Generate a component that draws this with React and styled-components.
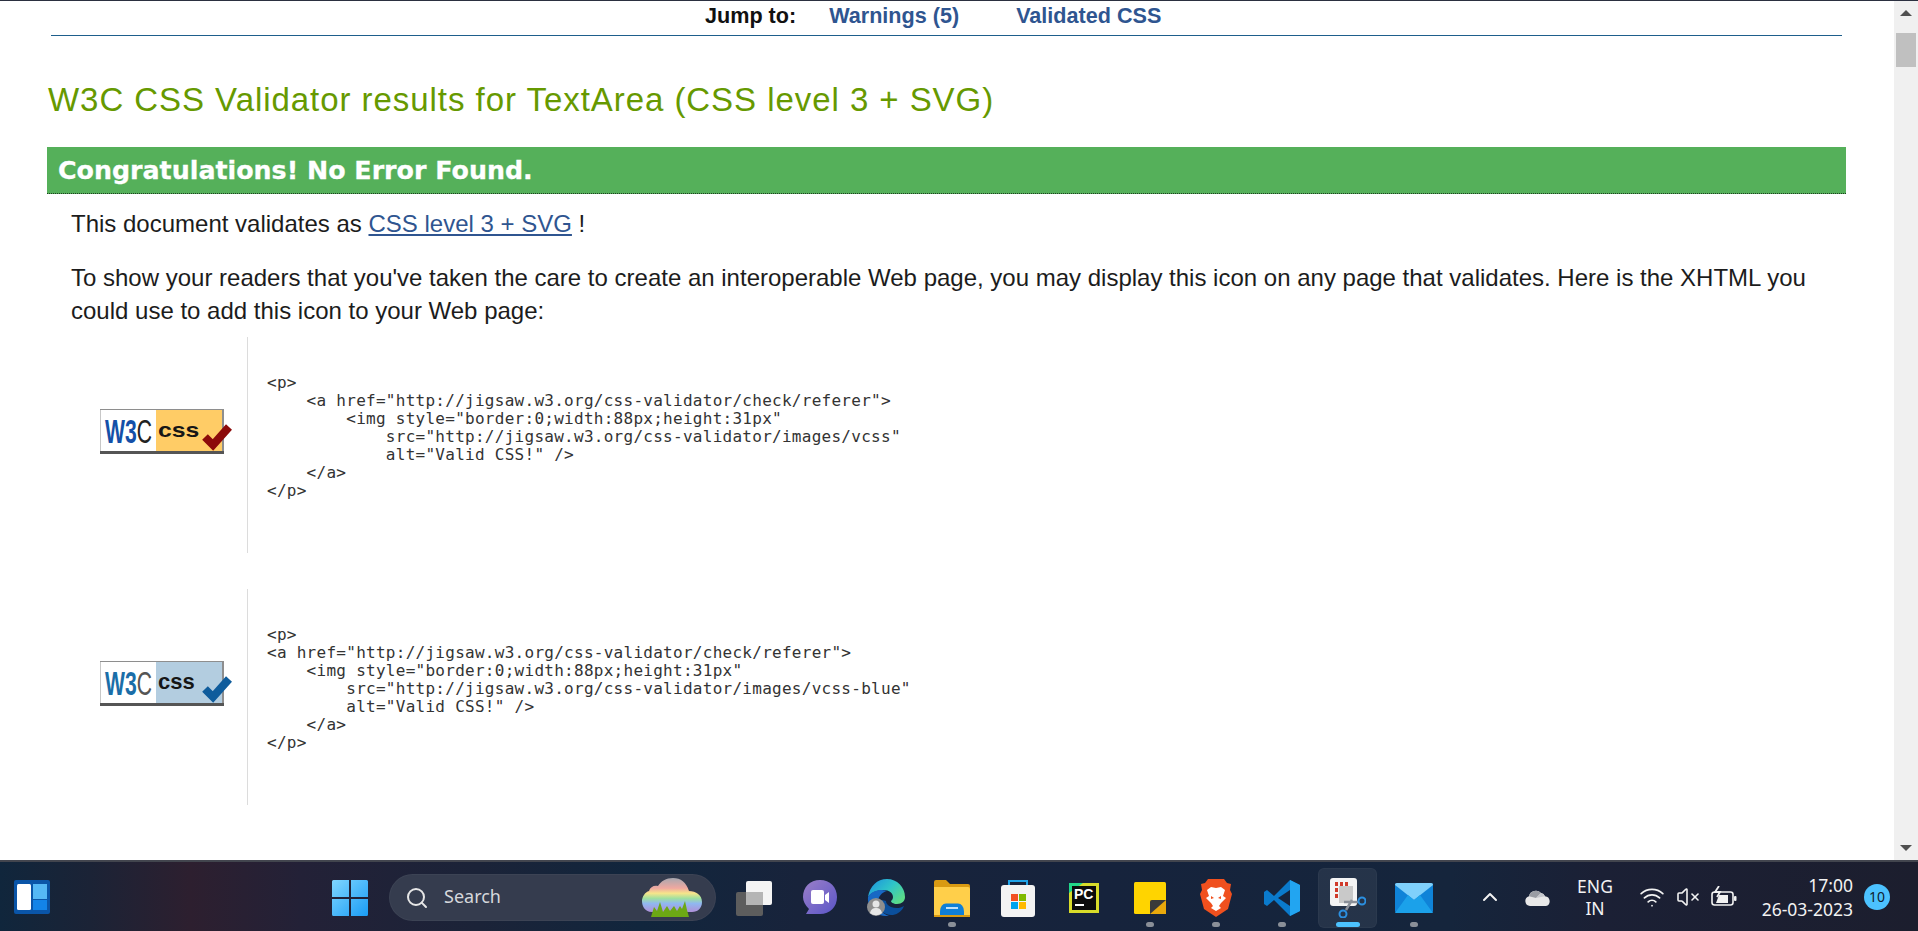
import React from "react";
import styled, { createGlobalStyle } from "styled-components";
import { Search, ChevronUp, Wifi, VolumeX } from "lucide-react";

const GlobalStyle = createGlobalStyle`
  html, body { margin: 0; padding: 0; height: 100%; overflow: hidden; background: #fff; }
  body { font-family: "Liberation Sans", Arial, sans-serif; color: #1c1c1c; }
`;

const Screen = styled.div`
  width: 1918px;
  height: 931px;
  display: flex;
  flex-direction: column;
  overflow: hidden;
`;

const Browser = styled.div`
  height: 860px;
  display: flex;
  border-top: 1px solid #2b3040;
  box-sizing: border-box;
  overflow: hidden;
`;

const Page = styled.main`
  flex: 1;
  min-width: 0;
`;

const JumpNav = styled.nav`
  margin: 0 52px 0 51px;
  height: 35px;
  padding-bottom: 5px;
  padding-left: 654px;
  box-sizing: border-box;
  display: flex;
  align-items: center;
  font-size: 21.6px;
  font-weight: bold;
  border-bottom: 1px solid #1e5f8c;
`;

const JumpLabel = styled.span`
  color: #111;
  margin-right: 33px;
`;

const JumpLink = styled.a`
  color: #2f5590;
  margin-right: 57px;
`;

const Heading = styled.h2`
  margin: 46px 0 0 48px;
  height: 36px;
  font-size: 33px;
  line-height: 36px;
  font-weight: normal;
  letter-spacing: 0.95px;
  color: #669900;
  white-space: nowrap;
`;

const Banner = styled.h3`
  margin: 29px 0 0 47px;
  width: 1799px;
  height: 47px;
  box-sizing: border-box;
  padding-left: 11px;
  background: #55b05a;
  border-bottom: 1px dotted #1c3f1e;
  color: #fff;
  font-family: "DejaVu Sans", sans-serif;
  font-size: 25.3px;
  line-height: 48px;
  font-weight: bold;
  -webkit-text-stroke: 0.3px #fff;
`;

const Copy = styled.p`
  margin: ${(p) => p.$top}px 0 0 71px;
  width: 1760px;
  font-size: 24px;
  line-height: 33px;
  color: #1c1c1c;
`;

const Underlined = styled.a`
  color: #2f5590;
  text-decoration: underline;
`;

const IconRow = styled.section`
  margin: ${(p) => p.$top}px 0 0 71px;
  height: 216px;
  display: flex;
`;

const BadgeCell = styled.div`
  width: 177px;
  padding: 72px 0 0 29px;
  box-sizing: border-box;
  border-right: 1px solid #dcdcdc;
`;

const Code = styled.pre`
  margin: 37px 0 0 19px;
  font-family: "DejaVu Sans Mono", "Liberation Mono", monospace;
  font-size: 16px;
  letter-spacing: 0.27px;
  line-height: 18px;
  color: #333;
`;

const Scrollbar = styled.aside`
  width: 24px;
  background: #f0f0f0;
  display: flex;
  flex-direction: column;
  align-items: center;
  padding-top: 9px;
  box-sizing: border-box;
`;

const Thumb = styled.div`
  width: 20px;
  height: 34px;
  margin-top: 17px;
  background: #c0c0c0;
`;

const Arrow = styled.div`
  width: 0;
  height: 0;
  border-left: 6px solid transparent;
  border-right: 6px solid transparent;
  ${(p) => (p.$down ? "border-top: 6px solid #505050; margin-top: auto; margin-bottom: 9px;" : "border-bottom: 6px solid #505050;")}
`;

const Taskbar = styled.footer`
  flex: 1;
  display: flex;
  align-items: center;
  border-top: 2px solid #42454e;
  box-sizing: border-box;
  color: #f2f2f2;
  font-family: "Noto Sans", "Open Sans", sans-serif;
  background: linear-gradient(90deg, #10263c 0, #1b2336 90px, #2d1f2f 190px, #232137 300px, #1b2338 480px, #11263d 640px, #18233b 800px, #16233c 1100px, #15253c 1450px, #1b2035 1600px, #1c1e2e 1918px);
`;

const WidgetsSlot = styled.div`
  margin-left: 14px;
  width: 36px;
  height: 34px;
  margin-right: 267px;
`;

const Cell = styled.div`
  position: relative;
  width: 66px;
  height: 60px;
  margin-top: 2px;
  display: flex;
  align-items: center;
  justify-content: center;
  box-sizing: border-box;
  ${(p) => p.$active && "&::before { content: ''; position: absolute; left: 3px; right: 4px; top: 0; bottom: 0; background: rgba(255,255,255,0.07); border-radius: 6px; box-shadow: inset 0 0 0 1px rgba(255,255,255,0.03); }"}
`;

const Dot = styled.span`
  position: absolute;
  left: 50%;
  bottom: 1px;
  transform: translateX(-50%);
  width: ${(p) => (p.$active ? 24 : 8)}px;
  height: 5px;
  border-radius: 3px;
  background: ${(p) => (p.$active ? "#4cc2ff" : "#8a8f98")};
`;

const SearchPill = styled.div`
  margin: 2px 5px 0 6px;
  width: 327px;
  height: 47px;
  box-sizing: border-box;
  padding: 0 14px 0 16px;
  border-radius: 24px;
  background: #353c4e;
  box-shadow: inset 0 0 0 1px rgba(255, 255, 255, 0.04);
  display: flex;
  align-items: center;
  color: #d6d8dc;
  font-size: 18px;
`;

const SearchLabel = styled.span`
  margin-left: 15px;
  padding-bottom: 3px;
  flex: 1;
`;

const Tray = styled.div`
  margin-left: auto;
  padding-right: 28px;
  display: flex;
  align-items: center;
  font-size: 17.5px;
`;

const TraySlot = styled.div`
  width: ${(p) => p.$w}px;
  display: flex;
  justify-content: center;
  align-items: center;
`;

const Lang = styled.div`
  width: 62px;
  margin-right: 8px;
  text-align: center;
  line-height: 22px;
`;

const Clock = styled.div`
  width: 111px;
  text-align: right;
  line-height: 24px;
`;

const Count = styled.div`
  width: 26px;
  height: 26px;
  margin-left: 11px;
  border-radius: 50%;
  background: #4cc2ff;
  color: #10202f;
  font-size: 14px;
  line-height: 26px;
  text-align: center;
`;

const cssFont = "Liberation Sans, Arial, sans-serif";

const Badge = ({ blue }) => (
  <svg width="136" height="48" viewBox="0 0 136 48" role="img" aria-label="Valid CSS">
    <rect x="0" y="0" width="124" height="45" fill="#8e8e8e" />
    <rect x="0.5" y="1" width="56" height="41" fill="#fff" />
    <rect x="56" y="1" width="66" height="41" fill={blue ? "#b3cde0" : "#ffcc66"} />
    <rect x="0" y="42" width="124" height="3" fill="#555" />
    <text transform="translate(5 34) scale(0.64 1)" fontFamily={cssFont} fontSize="33">
      <tspan fontWeight="bold" fill={blue ? "#1a6ea8" : "#1450a8"}>W3</tspan>
      <tspan fill={blue ? "#555" : "#222"}>C</tspan>
    </text>
    <text transform={blue ? "translate(58 28)" : "translate(58 28) scale(1.24 1)"} fontFamily={cssFont} fontSize={blue ? 22 : 20} fontWeight="bold" fill="#161616">css</text>
    <polyline points="105,28 113,36 129,18" fill="none" stroke={blue ? "#0f5c9c" : "#8c0a0a"} strokeWidth="8" />
  </svg>
);

const WidgetsIcon = () => (
  <svg width="36" height="34" viewBox="0 0 36 34">
    <rect width="36" height="34" rx="2" fill="#0a55a8" />
    <rect x="3" y="4" width="14" height="26" rx="1.5" fill="#fff" />
    <rect x="19" y="4" width="14" height="15" fill="#55b8f5" />
    <rect x="19" y="20" width="14" height="10" fill="#1384e8" />
  </svg>
);

const StartIcon = () => (
  <svg width="36" height="36" viewBox="0 0 36 36">
    <defs>
      <linearGradient id="st" x1="0" y1="0" x2="1" y2="1">
        <stop offset="0" stopColor="#7fd6ff" />
        <stop offset="1" stopColor="#1a9cf5" />
      </linearGradient>
    </defs>
    <path d="M1.5 0H17v17H0V1.5A1.5 1.5 0 0 1 1.5 0ZM19 0h15.5A1.5 1.5 0 0 1 36 1.5V17H19ZM0 19h17v17H1.5A1.5 1.5 0 0 1 0 34.5ZM19 19h17v15.5a1.5 1.5 0 0 1-1.5 1.5H19Z" fill="url(#st)" />
  </svg>
);

const RainbowCloud = () => (
  <svg width="60" height="42" viewBox="0 0 60 42">
    <defs>
      <linearGradient id="rb" x1="0" y1="0" x2="0" y2="1">
        <stop offset="0" stopColor="#a8a8b0" />
        <stop offset="0.3" stopColor="#f0a8a0" />
        <stop offset="0.45" stopColor="#f6e58a" />
        <stop offset="0.6" stopColor="#9fe0a0" />
        <stop offset="0.75" stopColor="#90b8f0" />
        <stop offset="1" stopColor="#b090d8" />
      </linearGradient>
    </defs>
    <path d="M10 35C2 35 0 28 0 24s3-9 7-10c1-4 5-6 9-5 3-5 8-8 15-8 8 0 13 4 16 13 7 0 13 4 13 11 0 6-4 10-10 10Z" fill="url(#rb)" />
    <path d="M9 40l3-10 3 4 3-9 3 10 4-6 3 5 4-5 3 5 3-5 2 3 3-8 2 9 2 7Z" fill="#6ca814" />
  </svg>
);

const TaskViewIcon = () => (
  <svg width="36" height="36" viewBox="0 0 36 36">
    <rect x="0" y="12" width="27" height="24" rx="2" fill="#5d5d5d" />
    <rect x="10" y="1" width="26" height="24" rx="2" fill="#f4f4f4" />
    <rect x="10" y="12" width="17" height="13" fill="#b5b5b5" />
  </svg>
);

const TeamsIcon = () => (
  <svg width="34" height="36" viewBox="0 0 34 36">
    <defs>
      <linearGradient id="tm" x1="0" y1="0" x2="1" y2="1">
        <stop offset="0" stopColor="#9b7fc8" />
        <stop offset="1" stopColor="#5a55c8" />
      </linearGradient>
    </defs>
    <path d="M17 0c10 0 17 7 17 17s-7 17-17 17H3l3-5C2 25 0 21 0 17 0 7 7 0 17 0Z" fill="url(#tm)" />
    <rect x="8" y="10" width="13" height="14" rx="2" fill="#fff" />
    <path d="M22 15l4-3v11l-4-3Z" fill="#fff" />
  </svg>
);

const EdgeIcon = () => (
  <svg width="38" height="38" viewBox="0 0 38 38">
    <defs>
      <linearGradient id="ed" x1="0" y1="0" x2="1" y2="0.7">
        <stop offset="0" stopColor="#1b8fe0" />
        <stop offset="0.55" stopColor="#2fc4c8" />
        <stop offset="1" stopColor="#5cdc88" />
      </linearGradient>
    </defs>
    <path d="M1 18C3 7 10 0 20 0c10 0 18 8 18 18 0 4-3 7-8 7-4 0-6-2-6-3 1-1 2-2 2-4 0-4-4-7-9-7S5 12 1 18Z" fill="url(#ed)" />
    <path d="M1 18c3-5 8-7 13-7 3 0 6 1 6 1-5 1-9 6-9 11 0 6 4 12 11 14C10 38 0 30 1 18Z" fill="#1868c4" />
    <path d="M11 23c0 8 7 14 15 13 5-1 9-4 11-9-3 2-8 3-13 1-4-2-5-4-5-6-3-1-6-1-8 1Z" fill="#0b4f9c" />
    <circle cx="9" cy="28" r="9" fill="#8e8e8e" />
    <circle cx="9" cy="25" r="3.5" fill="#e6e6e6" />
    <path d="M3 34c1-4 3-5 6-5s5 1 6 5a9 9 0 0 1-12 0Z" fill="#e6e6e6" />
  </svg>
);

const FolderIcon = () => (
  <svg width="36" height="38" viewBox="0 0 36 38">
    <path d="M0 3a2 2 0 0 1 2-2h10l4 4h18a2 2 0 0 1 2 2v4H0Z" fill="#d99a12" />
    <path d="M0 8h34a2 2 0 0 1 2 2v26H0Z" fill="#ffcf4a" />
    <path d="M6 34a6 6 0 0 1 6-6h12a6 6 0 0 1 6 6v4H6Z" transform="translate(0 -12) scale(1 1.3)" fill="#0f7fd8" />
    <rect x="0" y="36" width="36" height="2" fill="#d99a12" />
    <rect x="12" y="28" width="12" height="2" fill="#bfe0fa" />
  </svg>
);

const StoreIcon = () => (
  <svg width="34" height="38" viewBox="0 0 34 38">
    <path d="M8 8V2h18v6" fill="none" stroke="#1fa3e8" strokeWidth="2" />
    <rect x="0" y="6" width="34" height="32" rx="3" fill="#f3f3f3" />
    <rect x="10" y="15" width="7" height="7" fill="#f25022" />
    <rect x="18" y="15" width="7" height="7" fill="#7fba00" />
    <rect x="10" y="23" width="7" height="7" fill="#00a4ef" />
    <rect x="18" y="23" width="7" height="7" fill="#ffb900" />
  </svg>
);

const PyCharmIcon = () => (
  <svg width="30" height="30" viewBox="0 0 30 30">
    <rect width="30" height="30" fill="#d8dc2a" />
    <path d="M0 0h14L0 10Z" fill="#21d789" />
    <rect x="3" y="3" width="24" height="24" fill="#0c0c0c" />
    <text x="5" y="16" fontFamily={cssFont} fontSize="14" fontWeight="bold" fill="#fff">PC</text>
    <rect x="6" y="21" width="9" height="2" fill="#fff" />
  </svg>
);

const StickyIcon = () => (
  <svg width="32" height="32" viewBox="0 0 32 32">
    <rect width="32" height="32" rx="1.5" fill="#ffd400" />
    <path d="M16 32V20a2 2 0 0 1 2-2h14v14Z" fill="#e9a90c" />
    <path d="M16 32V20a2 2 0 0 1 2-2h14Z" fill="#3a3a3a" />
  </svg>
);

const BraveIcon = () => (
  <svg width="32" height="38" viewBox="0 0 32 38">
    <path d="M8 0h16l3 4 4 1-1 6 2 4-4 15-12 8-12-8L0 15l2-4-1-6 4-1Z" fill="#f0501e" />
    <path d="M16 9l5-1 4 3-2 6 3 2-5 5-2 3 2 2-5 3-5-3 2-2-2-3-5-5 3-2-2-6 4-3Z" fill="#fff" />
    <path d="M11 17l3 2-3 1ZM21 17l-3 2 3 1Z" fill="#f0501e" />
  </svg>
);

const VsCodeIcon = () => (
  <svg width="36" height="36" viewBox="0 0 36 36">
    <path d="M26 0l10 5v26l-10 5L10 20 3 26l-3-2V12l3-2 7 6Z" fill="#0a7acc" />
    <path d="M26 0l10 5v26l-10 5Z" fill="#22a5f1" />
    <path d="M26 10L14 18l12 8Z" fill="#16233c" />
  </svg>
);

const SnipIcon = () => (
  <svg width="36" height="40" viewBox="0 0 36 40" style={{ position: "relative" }}>
    <rect x="0" y="0" width="27" height="28" rx="3" fill="#f4f4f4" />
    <rect x="9" y="8" width="14" height="17" fill="#c9c9c9" />
    <path d="M5 4h3v4H5ZM10 4h3v4h-3ZM15 4h3v4h-3ZM5 10h3v4H5ZM5 16h3v4H5Z" fill="#d03a2a" />
    <path d="M22 22l-6 10M14 24l14 0" stroke="#8a8f98" strokeWidth="2.5" />
    <circle cx="13" cy="36" r="3.5" fill="none" stroke="#2b8fe0" strokeWidth="2" />
    <circle cx="32" cy="23" r="3.5" fill="none" stroke="#2b8fe0" strokeWidth="2" />
  </svg>
);

const MailIcon = () => (
  <svg width="38" height="32" viewBox="0 0 38 32">
    <rect x="0" y="1" width="38" height="30" rx="2" fill="#0f83d8" />
    <path d="M0 3a2 2 0 0 1 2-2h34a2 2 0 0 1 2 2L19 18Z" fill="#7fd0fb" />
    <path d="M0 31l13-18 6 5 6-5 13 18Z" fill="#1ba1ea" />
  </svg>
);

const OneDrive = () => (
  <svg width="26" height="18" viewBox="0 0 26 18">
    <path d="M5 18a5 5 0 0 1-1-9.8A7 7 0 0 1 16 5a5.5 5.5 0 0 1 4 3.2A5 5 0 0 1 21 18Z" fill="#e8e8e8" />
    <path d="M4 8.2A7 7 0 0 1 16 5l-5 5Z" fill="#9a9da4" />
    <path d="M11 10l5-5a5.5 5.5 0 0 1 4 3.2Z" fill="#c5c7cc" />
  </svg>
);

const BatteryIcon = () => (
  <svg width="26" height="22" viewBox="0 0 26 22" fill="none" stroke="#f2f2f2" strokeWidth="1.6">
    <rect x="1" y="6" width="21" height="13" rx="2.5" />
    <rect x="23" y="10" width="2.5" height="5" rx="1" fill="#f2f2f2" stroke="none" />
    <path d="M5 17l3-8h9v8Z" fill="#f2f2f2" stroke="none" />
    <path d="M8 0L4 6h5L6 11" stroke="#f2f2f2" strokeWidth="1.8" />
  </svg>
);

const apps = [
  { key: "taskview", icon: <TaskViewIcon /> },
  { key: "teams", icon: <TeamsIcon /> },
  { key: "edge", icon: <EdgeIcon /> },
  { key: "files", icon: <FolderIcon />, open: true },
  { key: "store", icon: <StoreIcon /> },
  { key: "pycharm", icon: <PyCharmIcon /> },
  { key: "sticky", icon: <StickyIcon />, open: true },
  { key: "brave", icon: <BraveIcon />, open: true },
  { key: "vscode", icon: <VsCodeIcon />, open: true },
  { key: "snip", icon: <SnipIcon />, active: true },
  { key: "mail", icon: <MailIcon />, open: true },
];

const redCode = `<p>
    <a href="http://jigsaw.w3.org/css-validator/check/referer">
        <img style="border:0;width:88px;height:31px"
            src="http://jigsaw.w3.org/css-validator/images/vcss"
            alt="Valid CSS!" />
    </a>
</p>`;

const blueCode = `<p>
<a href="http://jigsaw.w3.org/css-validator/check/referer">
    <img style="border:0;width:88px;height:31px"
        src="http://jigsaw.w3.org/css-validator/images/vcss-blue"
        alt="Valid CSS!" />
    </a>
</p>`;

const App = () => {
  return (
    <Screen>
      <GlobalStyle />
      <Browser>
        <Page>
          <JumpNav>
            <JumpLabel>Jump to:</JumpLabel>
            <JumpLink>Warnings (5)</JumpLink>
            <JumpLink>Validated CSS</JumpLink>
          </JumpNav>
          <Heading>W3C CSS Validator results for TextArea (CSS level 3 + SVG)</Heading>
          <Banner>Congratulations! No Error Found.</Banner>
          <Copy $top={13}>
            This document validates as <Underlined>CSS level 3 + SVG</Underlined> !
          </Copy>
          <Copy $top={21}>
            To show your readers that you've taken the care to create an interoperable Web page, you may display this icon on any page that validates. Here is the XHTML you could use to add this icon to your Web page:
          </Copy>
          <IconRow $top={10}>
            <BadgeCell>
              <Badge />
            </BadgeCell>
            <Code>{redCode}</Code>
          </IconRow>
          <IconRow $top={36}>
            <BadgeCell>
              <Badge blue />
            </BadgeCell>
            <Code>{blueCode}</Code>
          </IconRow>
        </Page>
        <Scrollbar>
          <Arrow />
          <Thumb />
          <Arrow $down />
        </Scrollbar>
      </Browser>
      <Taskbar>
        <WidgetsSlot>
          <WidgetsIcon />
        </WidgetsSlot>
        <Cell>
          <StartIcon />
        </Cell>
        <SearchPill>
          <Search size={24} strokeWidth={2} color="#e6e6e6" />
          <SearchLabel>Search</SearchLabel>
          <RainbowCloud />
        </SearchPill>
        {apps.map((app) => (
          <Cell key={app.key} $active={app.active}>
            {app.icon}
            {(app.open || app.active) && <Dot $active={app.active} />}
          </Cell>
        ))}
        <Tray>
          <TraySlot $w={44}>
            <ChevronUp size={24} strokeWidth={2} />
          </TraySlot>
          <TraySlot $w={52}>
            <OneDrive />
          </TraySlot>
          <Lang>
            ENG
            <br />
            IN
          </Lang>
          <TraySlot $w={36}>
            <Wifi size={26} strokeWidth={1.6} />
          </TraySlot>
          <TraySlot $w={36}>
            <VolumeX size={24} strokeWidth={1.6} />
          </TraySlot>
          <TraySlot $w={36}>
            <BatteryIcon />
          </TraySlot>
          <Clock>
            17:00
            <br />
            26-03-2023
          </Clock>
          <Count>10</Count>
        </Tray>
      </Taskbar>
    </Screen>
  );
};

export default App;
